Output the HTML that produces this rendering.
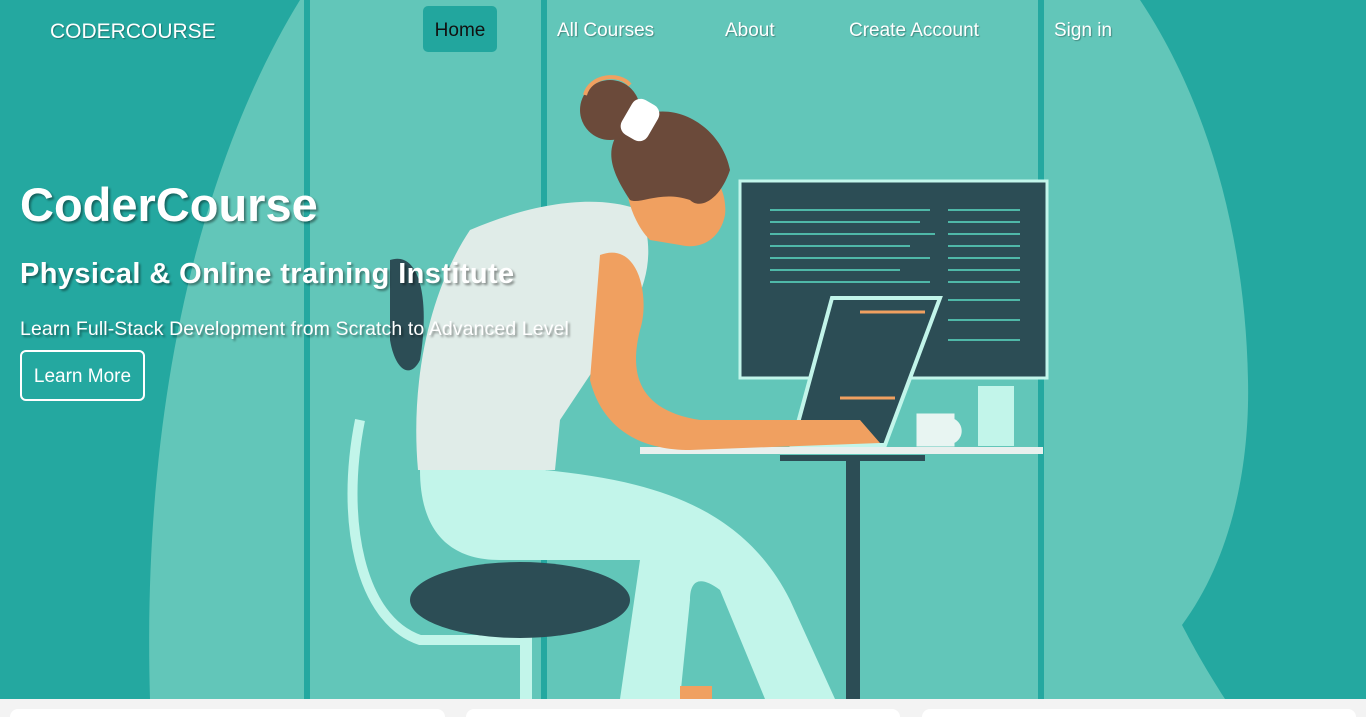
<!DOCTYPE html>
<html><head><style>
html,body{margin:0;width:1366px;height:717px;overflow:hidden}
body{background:#f3f3f3;font-family:"Liberation Sans",sans-serif;position:relative}
.hero{position:absolute;left:0;top:0;width:1366px;height:699px;background:#24a8a0;overflow:hidden}
svg{position:absolute;left:0;top:0}
.logo{position:absolute;left:50px;top:20px;color:#fff;font-size:21px;text-shadow:1px 1px 1px rgba(0,0,0,.3)}
.nav a{position:absolute;top:20px;color:#fff;font-size:19px;text-shadow:1px 1px 1px rgba(0,0,0,.3)}
.home{position:absolute;left:423px;top:6px;width:74px;height:46px;background:#22a69e;border-radius:5px;color:#111;font-size:19px;line-height:50px;text-align:center}
.t{position:absolute;left:20px;color:#fff;text-shadow:2px 2px 2px rgba(0,0,0,.4)}
.btn{position:absolute;left:20px;top:350px;width:121px;height:47px;border:2px solid #fff;border-radius:6px;color:#fff;font-size:19px;line-height:49px;text-align:center}
.card{position:absolute;top:709px;height:8px;background:#fff;border-radius:8px 8px 0 0}
</style></head><body>
<div class="hero">
<svg width="1366" height="699" viewBox="0 0 1366 699">
<path d="M300,0 C220,130 140,360 150,699 L1225,699 C1200,660 1190,640 1182,625 C1230,560 1250,470 1248,380 C1245,220 1200,90 1140,0 Z" fill="#62c6b9"/>
<rect x="304" y="0" width="6" height="699" fill="#24a8a0"/>
<rect x="541" y="0" width="6" height="699" fill="#24a8a0"/>
<rect x="1038" y="0" width="6" height="699" fill="#24a8a0"/>
<rect x="740" y="181" width="307" height="197" fill="#2c4d55" stroke="#c2f5ea" stroke-width="3"/>
<g stroke="#4fb8a8" stroke-width="2">
<line x1="770" y1="210" x2="930" y2="210"/><line x1="770" y1="222" x2="920" y2="222"/><line x1="770" y1="234" x2="935" y2="234"/><line x1="770" y1="246" x2="910" y2="246"/><line x1="770" y1="258" x2="930" y2="258"/><line x1="770" y1="270" x2="900" y2="270"/><line x1="770" y1="282" x2="930" y2="282"/>
<line x1="948" y1="210" x2="1020" y2="210"/><line x1="948" y1="222" x2="1020" y2="222"/><line x1="948" y1="234" x2="1020" y2="234"/><line x1="948" y1="246" x2="1020" y2="246"/><line x1="948" y1="258" x2="1020" y2="258"/><line x1="948" y1="270" x2="1020" y2="270"/><line x1="948" y1="282" x2="1020" y2="282"/><line x1="948" y1="300" x2="1020" y2="300"/><line x1="948" y1="320" x2="1020" y2="320"/><line x1="948" y1="340" x2="1020" y2="340"/>
</g>
<polygon points="832,298 940,298 885,445 792,445" fill="#2c4d55" stroke="#c2f5ea" stroke-width="4"/>
<line x1="860" y1="312" x2="925" y2="312" stroke="#f0a060" stroke-width="3"/>
<line x1="840" y1="398" x2="895" y2="398" stroke="#f0a060" stroke-width="3"/>
<rect x="640" y="447" width="403" height="7" fill="#e8f0ee"/>
<rect x="780" y="455" width="145" height="6" fill="#2c4d55"/>
<rect x="846" y="455" width="14" height="244" fill="#2c4d55"/>
<rect x="978" y="386" width="36" height="60" fill="#c2f5ea"/>
<path d="M918 415h35v30h-35z M953 420a12 12 0 0 1 0 22" fill="#e8f5f2" stroke="#e8f5f2" stroke-width="3"/>
<path d="M360 420 C340 520 360 620 420 640 L520 640" stroke="#c2f5ea" stroke-width="10" fill="none"/>
<path d="M390 260 C420 250 430 300 420 360 C410 380 395 370 390 340 Z" fill="#2c4d55"/>
<rect x="520" y="620" width="12" height="79" fill="#c2f5ea"/>
<path d="M420 470 L545 470 C640 480 740 500 790 600 L835 699 L765 699 L720 590 C700 575 690 580 690 600 L680 699 L620 699 L640 560 L500 560 C440 560 420 520 420 470Z" fill="#c2f5ea"/>
<rect x="680" y="686" width="32" height="13" fill="#f0a060"/>
<ellipse cx="520" cy="600" rx="110" ry="38" fill="#2c4d55"/>
<path d="M470 230 C540 200 600 195 640 210 C660 260 640 300 620 330 L560 420 L555 470 L418 470 C410 380 430 290 470 230Z" fill="#e0ece8"/>
<path d="M600 255 C640 240 650 300 640 330 C630 370 635 410 700 420 L860 420 L880 443 L690 450 C630 450 600 420 590 380 Z" fill="#f0a060"/>
<path d="M630 160 C680 140 730 170 725 215 C720 240 700 250 680 245 L650 240 C630 220 620 180 630 160Z" fill="#f0a060"/>
<path d="M620 130 C660 90 720 120 730 170 C720 200 700 210 690 200 C660 190 640 205 630 200 C610 170 605 150 620 130Z" fill="#6b4a3a"/>
<circle cx="610" cy="110" r="30" fill="#6b4a3a"/>
<path d="M585 95 C590 75 620 72 630 85" stroke="#f0a060" stroke-width="4" fill="none"/>
<rect x="625" y="100" width="30" height="40" rx="10" fill="#fff" transform="rotate(30 640 120)"/>
</svg>
<div class="logo">CODERCOURSE</div>
<div class="home">Home</div>
<div class="nav"><a style="left:557px">All Courses</a><a style="left:725px">About</a><a style="left:849px">Create Account</a><a style="left:1054px">Sign in</a></div>
<div class="t" style="top:177px;font-size:47px;font-weight:bold">CoderCourse</div>
<div class="t" style="top:258px;font-size:29px;font-weight:bold;letter-spacing:0.4px">Physical &amp; Online training Institute</div>
<div class="t" style="top:318px;font-size:19.5px;letter-spacing:0.1px">Learn Full-Stack Development from Scratch to Advanced Level</div>
<div class="btn">Learn More</div>
</div>
<div class="card" style="left:10px;width:435px"></div>
<div class="card" style="left:466px;width:434px"></div>
<div class="card" style="left:922px;width:434px"></div>
</body></html>
